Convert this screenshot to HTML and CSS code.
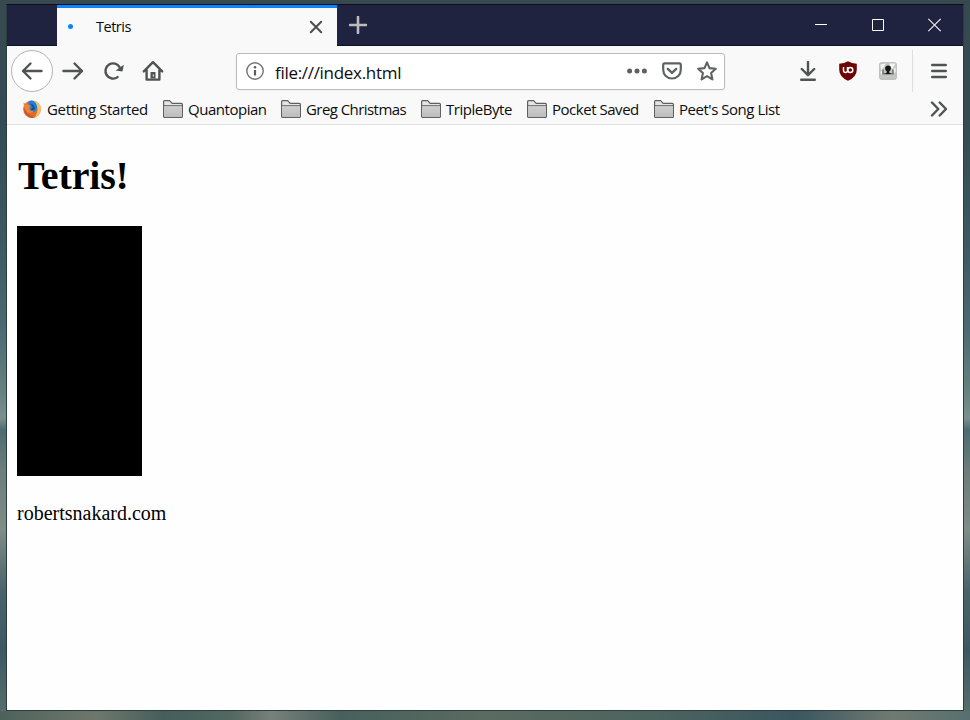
FILE: index.html
```html
<!DOCTYPE html>
<html lang="en">
<head>
<meta charset="utf-8">
<title>Tetris</title>
<link rel="stylesheet" href="styles.css">
</head>
<body>
<svg width="0" height="0" class="defs">
  <defs>
    <linearGradient id="fold" x1="0" y1="0" x2="0" y2="1"><stop offset="0" stop-color="#cfcfcf"/><stop offset="1" stop-color="#bdbdbd"/></linearGradient>
    <symbol id="folder" viewBox="0 0 20 18">
      <path d="M.6 16.4V1.6Q.6.7 1.5.7H6.6L9.2 3.3H18.3Q19.4 3.3 19.4 4.3V16.4Q19.4 17.3 18.4 17.3H1.6Q.6 17.3.6 16.4Z" fill="#e4e4e6" stroke="#606060" stroke-width="1.2"/>
      <path d="M1.2 6H18.8V16.7H1.2Z" fill="url(#fold)"/>
      <path d="M1 5.6H19" stroke="#707070" stroke-width="1"/>
    </symbol>
  </defs>
</svg>
<div class="window">
  <header class="titlebar">
    <div class="tab">
      <span class="dot"></span>
      <span class="tab-title">Tetris</span>
      <svg class="tab-close" width="14" height="14" viewBox="0 0 14 14"><path d="M1.8 1.8 12.2 12.2M12.2 1.8 1.8 12.2" stroke="#4a4e4e" stroke-width="2" stroke-linecap="round"/></svg>
    </div>
    <svg class="new-tab" width="18" height="18" viewBox="0 0 18 18"><path d="M9 1V17M1 9H17" stroke="#bcbcba" stroke-width="2.6" stroke-linecap="round"/></svg>
    <div class="controls">
      <svg width="14" height="14" viewBox="0 0 14 14"><path d="M1 6.5H13" stroke="#fff"/></svg>
      <svg width="14" height="14" viewBox="0 0 14 14"><path d="M1.5 1.5H12.5V12.5H1.5Z" fill="none" stroke="#fff"/></svg>
      <svg width="14" height="14" viewBox="0 0 14 14"><path d="M.3.8 12.7 13.2M12.7.8.3 13.2" stroke="#f2f2f2" stroke-width="1.2"/></svg>
    </div>
  </header>
  <nav class="toolbar">
    <div class="back"><svg width="22" height="20" viewBox="0 0 22 20"><path d="M2 10H20.5M9.5 2.5 2 10 9.5 17.5" class="ln"/></svg></div>
    <svg class="forward" width="22" height="20" viewBox="0 0 22 20"><path d="M1.5 10H20M12.5 2.5 20 10 12.5 17.5" class="ln"/></svg>
    <svg class="reload" width="22" height="20" viewBox="0 0 22 20"><path d="M14.6 16.1A7.6 7.6 0 1 1 16.7 6.3" class="ln"/><path d="M20.9 3.8 19.4 10.4 12.6 9.4Z" fill="#505352"/></svg>
    <svg class="home" width="22" height="22" viewBox="0 0 22 22"><path d="M1.8 11.4 11 2.2 20.2 11.4M4.6 10V19.6H17.4V10" class="ln"/><path d="M8.5 18.5V12H13.5V18.5Z" fill="#505352"/><path d="M11.3 14.5V16.5" stroke="#f9f9fa" stroke-width="1"/></svg>
    <div class="urlbar">
      <svg class="info" width="18" height="18" viewBox="0 0 18 18"><circle cx="9" cy="9" r="8.2" fill="none" stroke="#737373" stroke-width="1.4"/><circle cx="9" cy="5.3" r="1.3" fill="#5c5c5c"/><path d="M9 8V13.5" stroke="#5c5c5c" stroke-width="2.2"/></svg>
      <span class="url">file:///index.html</span>
      <svg class="dots" width="20" height="6" viewBox="0 0 20 6"><g fill="#5e6060"><circle cx="2.6" cy="3" r="2.5"/><circle cx="10" cy="3" r="2.5"/><circle cx="17.4" cy="3" r="2.5"/></g></svg>
      <svg class="pocket" width="20" height="18" viewBox="0 0 20 18"><path d="M2.6 1.4H17.4Q18.8 1.4 18.8 2.8V7.8C18.8 12.7 14.9 16.5 10 16.5S1.2 12.7 1.2 7.8V2.8Q1.2 1.4 2.6 1.4Z" fill="none" stroke="#606262" stroke-width="2.2"/><path d="M5.8 6.9 10 10.8 14.2 6.9" fill="none" stroke="#606262" stroke-width="2.4" stroke-linecap="round" stroke-linejoin="round"/></svg>
      <svg class="star" width="20" height="20" viewBox="0 0 20 20"><path d="M10 1.4 12.5 7.1 18.8 7.8 14.1 12 15.4 18.4 10 15.2 4.6 18.4 5.9 12 1.2 7.8 7.5 7.1Z" fill="none" stroke="#606262" stroke-width="2.1" stroke-linejoin="round"/></svg>
    </div>
    <svg class="download" width="16" height="20" viewBox="0 0 16 20"><path d="M8 1V13.5M1.8 8 8 14.2 14.2 8M1.2 18.7H14.8" class="ln"/></svg>
    <svg class="shield" width="18" height="20" viewBox="0 0 18 20"><path d="M9 .3Q12.5 2.6 17.8 2.8V8.5Q17.8 16 9 19.8.2 16 .2 8.5V2.8Q5.5 2.6 9 .3Z" fill="#6d0303"/><path d="M4.5 6V9.4A2 2 0 0 0 8.5 9.4V6" fill="none" stroke="#fff" stroke-width="1.5"/><circle cx="11.3" cy="9" r="2.5" fill="none" stroke="#fff" stroke-width="1.5"/></svg>
    <svg class="ext" width="18" height="18" viewBox="0 0 18 18"><rect x=".7" y=".7" width="16.6" height="16.6" rx="1.5" fill="#c4c6c4" stroke="#b7b7b7"/><path d="M1.5 2.5 6.5 1.5 5 5 2 8ZM10 1.5H16.5L13.5 7 12 5ZM1.5 10 4 7V10L2 13ZM14 8 16.5 5V10L14.5 12Z" fill="#f4f5f0"/><path d="M4 7.5V11.7H14V7.5" fill="none" stroke="#69706d" stroke-width="1.5"/><path d="M9 3.6Q12 3.8 11.9 6.3T10.3 9.2V10.5L12 12H6L7.7 10.5V9.2Q6.1 8.6 6.1 6.3T9 3.6Z" fill="#101719"/></svg>
    <span class="divider"></span>
    <svg class="menu" width="16" height="16" viewBox="0 0 16 16"><path d="M1.2 2H14.8M1.2 8H14.8M1.2 14H14.8" class="ln"/></svg>
  </nav>
  <nav class="bookmarks">
    <a class="bm b1"><svg width="20" height="20" viewBox="0 0 20 20"><circle cx="10" cy="10.2" r="8.8" fill="#df6b2b"/><path d="M10 1.5Q19 2.5 18.9 10.5 18 17 12 18.8 15.5 15 15.5 9.5 15 5 10 1.5Z" fill="#f9bf62"/><path d="M6.2 2.8Q9.6-.2 13.2 3.2 16 7 14.5 11 13 13.5 10 13 7.6 12 8.2 9.5L8.6 7.6 7 6Z" fill="#1b82dc"/><path d="M8 4.5 11.5 6 13 9.5 11.5 11.5 8.5 10.5 11 8.5Z" fill="#164b91"/><path d="M1.5 3.8 4.8 5.6 8.3 6.4 6.8 8.8 7.4 10.8Q9 12.6 12 11.4 10 14.9 5.7 13.6 2 11 1.5 3.8Z" fill="#e8863a"/><path d="M1.6 9Q2.2 16 9 18.8L13 18.4Q6 16.5 3.5 11.5Z" fill="#c9532d"/></svg><span>Getting Started</span></a>
    <a class="bm b2"><svg width="20" height="18"><use href="#folder"/></svg><span>Quantopian</span></a>
    <a class="bm b3"><svg width="20" height="18"><use href="#folder"/></svg><span>Greg Christmas</span></a>
    <a class="bm b4"><svg width="20" height="18"><use href="#folder"/></svg><span>TripleByte</span></a>
    <a class="bm b5"><svg width="20" height="18"><use href="#folder"/></svg><span>Pocket Saved</span></a>
    <a class="bm b6"><svg width="20" height="18"><use href="#folder"/></svg><span>Peet's Song List</span></a>
    <svg class="more" width="18" height="16" viewBox="0 0 18 16"><path d="M2 1.5 8.3 8 2 14.5M9.7 1.5 16 8 9.7 14.5" class="ln"/></svg>
  </nav>
  <main class="page">
    <h1>Tetris!</h1>
    <div class="board"></div>
    <p>robertsnakard.com</p>
  </main>
</div>
</body>
</html>
```
FILE: styles.css
```css
* { box-sizing: border-box; }
body {
  margin: 0;
  width: 970px;
  height: 720px;
  padding: 4px 6px 9px;
  overflow: hidden;
  font-family: "Open Sans", "Noto Sans", sans-serif;
  color: #0c0c0d;
  background:
    linear-gradient(90deg, #4d625b, #6f776c 10%, #455e5b 17%, #536961 24%, #78807a 28%, #48605c 35%, #5a6b61 50%, #4c635e 68%, #3a5660 82%, #707a70 92%, #57706f) 0 711px / 970px 9px no-repeat,
    linear-gradient(#37494f 0, #344b54 120px, #3c5860 240px, #4c6a73 330px, #65817f 390px, #7c8f8f 418px, #4d6c70 430px, #6c7d7b 470px, #7f8c88 530px, #4b646b 590px, #3e5862 650px, #566d6b 711px);
}
.defs { position: absolute; }
svg { display: block; flex: none; }
.ln { fill: none; stroke: #505352; stroke-width: 2.4; stroke-linecap: round; stroke-linejoin: round; }
.window {
  display: flex;
  flex-direction: column;
  height: 707px;
  border: 1px solid #2c3d40;
  border-top-color: #0b0d18;
  background: #fff;
}
.titlebar {
  display: flex;
  height: 41px;
  padding-left: 50px;
  background: #20233f;
  border-bottom: 1px solid #0e1028;
}
.tab {
  display: flex;
  align-items: center;
  width: 280px;
  height: 41px;
  padding: 1px 14px 0 11px;
  border-top: 3px solid #0a84ff;
  background: #f9f9fa;
}
.dot { width: 5px; height: 5px; border-radius: 50%; background: #0a84ff; margin-top: -2px; }
.tab-title { margin-left: 23px; font-size: 14.5px; line-height: 20px; letter-spacing: -.5px; margin-top: -2px; }
.tab-close { margin-left: auto; margin-top: -1px; }
.new-tab { margin: 11px 0 0 12px; }
.controls { display: flex; gap: 43px; margin: 13px 21px 0 auto; }
.toolbar { display: flex; align-items: center; height: 51px; padding: 0 0 1px 4px; background: #f9f9fa; }
.back {
  display: grid;
  place-items: center;
  width: 42px;
  height: 42px;
  border: 1px solid #b4b4b4;
  border-radius: 50%;
  background: #fff;
}
.forward { margin-left: 9px; }
.reload { margin-left: 19px; }
.home { margin-left: 17px; }
.urlbar {
  display: flex;
  align-items: center;
  width: 489px;
  height: 37px;
  margin-left: 72px;
  padding: 0 7px 0 9px;
  border: 1px solid #bababb;
  border-radius: 3px;
  background: #fff;
  box-shadow: 0 1px 3px rgba(0, 0, 0, .04);
}
.info, .dots, .pocket, .star { margin-top: -1px; }
.url { margin-left: 11px; font-size: 17px; letter-spacing: -.3px; line-height: 24px; margin-top: 3px; }
.dots { margin-left: auto; }
.pocket { margin-left: 15px; }
.star { margin-left: 15px; }
.download { margin-left: 75px; }
.shield { margin-left: 23px; }
.ext { margin-left: 22px; }
.divider { width: 1px; height: 42px; margin-left: 15px; background: #dedede; }
.menu { margin-left: 18px; }
.bookmarks {
  display: grid;
  grid-template-columns: 141px 118px 140px 106px 127px 276px 18px;
  align-items: center;
  height: 28px;
  padding: 0 0 3px 15px;
  background: #f9f9fa;
  border-bottom: 1px solid #e0e0e1;
}
.bm { display: flex; align-items: center; gap: 5px; height: 24px; font-size: 15px; line-height: 20px; white-space: nowrap; letter-spacing: -.47px; }
.b1 { letter-spacing: -.35px; }
.b3 { letter-spacing: -.56px; }
.page { flex: 1; padding: 26px 10px 0; background: #fefefe; font-family: "Liberation Serif", serif; color: #000; }
h1 { margin: 0 0 26px 1px; font-size: 40px; line-height: 49px; font-weight: 700; letter-spacing: -.15px; }
.board { width: 125px; height: 250px; background: #000; }
p { margin: 25px 0 0; font-size: 20px; line-height: 24px; }
```
